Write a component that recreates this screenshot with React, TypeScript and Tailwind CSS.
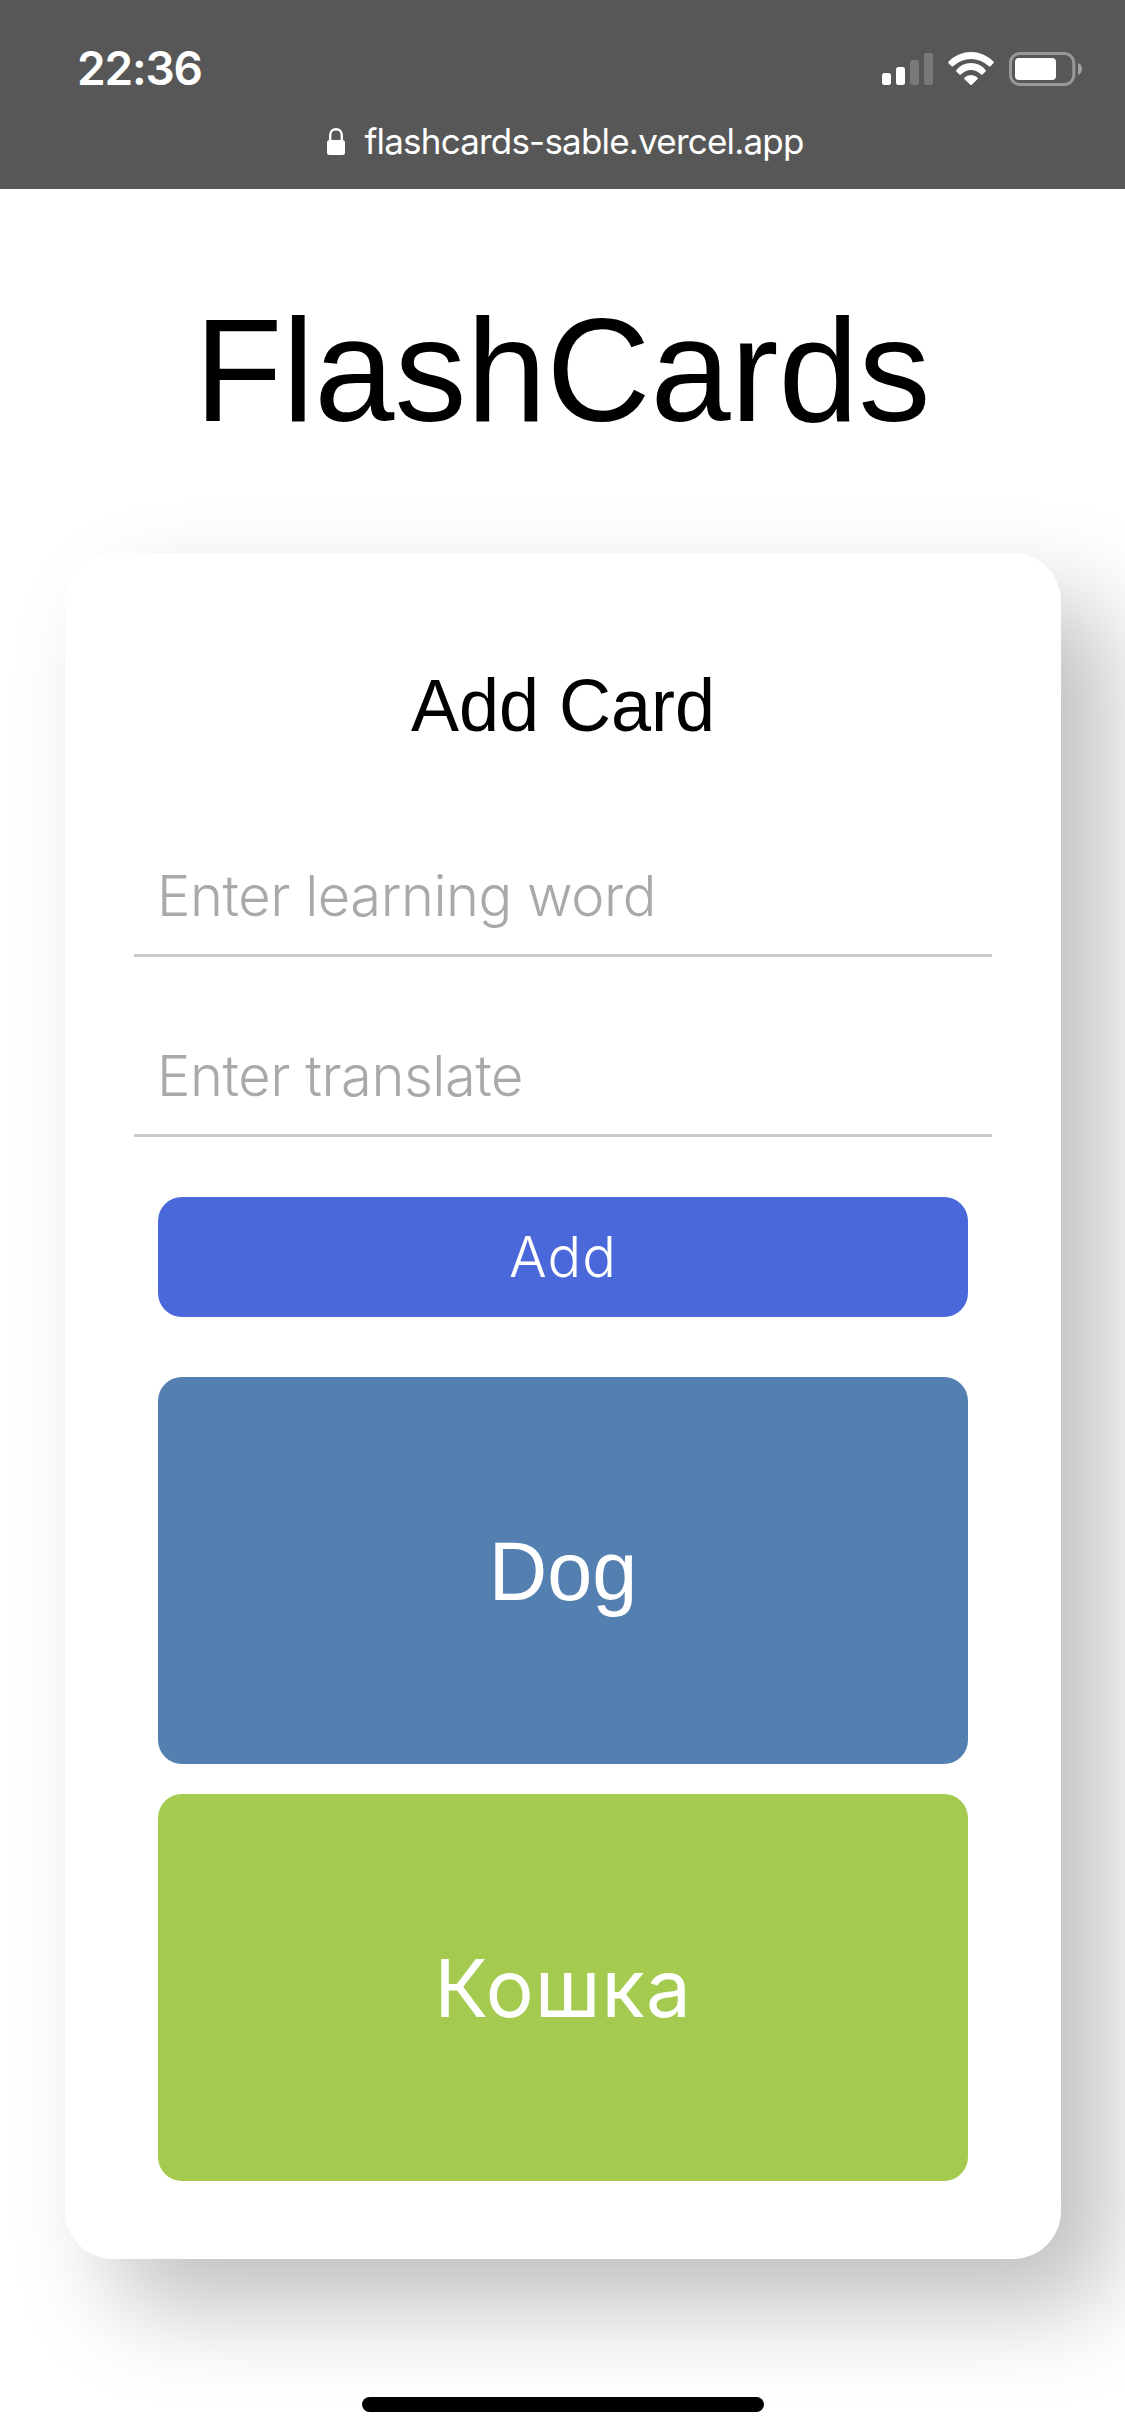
import { useState } from 'react';

const sans = "font-['Liberation_Sans',Arial,sans-serif]";
const inter = 'font-[Inter,sans-serif]';

function SignalIcon() {
  return (
    <svg width="51" height="34" viewBox="0 0 51 34" fill="#fff">
      <rect x="0" y="21" width="9" height="12" rx="2.5" />
      <rect x="14" y="15" width="9" height="18" rx="2.5" />
      <rect x="28" y="8" width="9" height="25" rx="2.5" fill="#797979" />
      <rect x="42" y="1" width="9" height="32" rx="2.5" fill="#797979" />
    </svg>
  );
}

function WifiIcon() {
  return (
    <svg width="46" height="34" viewBox="0 0 46 34" fill="#fff">
      <path d="M.6 9.6A31 31 0 0 1 45.4 9.6q.8.8 0 1.6L42.4 14.3q-.7.6-1.4 0A25.9 25.9 0 0 0 5 14.3q-.7.6-1.4 0L.6 11.2q-.8-.8 0-1.6z" />
      <path d="M8.4 18A18.8 18.8 0 0 1 37.6 18q.7.7 0 1.4L34.5 22.5q-.7.6-1.4 0A13.6 13.6 0 0 0 12.9 22.5q-.7.6-1.4 0L8.4 19.4q-.7-.7 0-1.4z" />
      <path d="M16.3 25.7A9.7 9.7 0 0 1 29.7 25.7q.6.7 0 1.3L23.7 32.7q-.7.6-1.4 0L16.3 27q-.6-.7 0-1.3z" />
    </svg>
  );
}

function BatteryIcon() {
  return (
    <svg width="73" height="34" viewBox="0 0 73 34">
      <rect x="1.5" y="1.5" width="63.3" height="31" rx="9.5" fill="none" stroke="#989898" strokeWidth="3" />
      <rect x="6" y="6" width="41" height="22" rx="4" fill="#fff" />
      <path d="M69 11c2.6 1 4 3.300 4 6s-1.400 5-4 6z" fill="#a0a0a0" />
    </svg>
  );
}

function LockIcon() {
  return (
    <svg width="18" height="27" viewBox="0 0 18 27">
      <path d="M3.200 14V7.500C3.200 3.600 5.600 1.200 9 1.200s5.800 2.400 5.800 6.300V14" fill="none" stroke="#fff" strokeWidth="2.400" />
      <rect x="0" y="12" width="18" height="15" rx="2.500" fill="#fff" />
    </svg>
  );
}

function BrowserHeader() {
  return (
    <header className={`h-[189px] bg-[#575757] pt-10 text-white ${inter}`}>
      <div className="flex h-[58px] items-center justify-between pl-[77px] pr-[43px]">
        <span className="pb-[2px] text-[46px] leading-none font-semibold tracking-[-1.2px]">22:36</span>
        <div className="flex items-center">
          <SignalIcon />
          <span className="ml-[15px]"><WifiIcon /></span>
          <span className="ml-[15px]"><BatteryIcon /></span>
        </div>
      </div>
      <div className="mt-[22px] flex h-[42px] items-center justify-center gap-[19px] pl-[6px]">
        <LockIcon />
        <span className="text-[35px] leading-[42px] tracking-[-0.8px]">flashcards-sable.vercel.app</span>
      </div>
    </header>
  );
}

function WordInput({ placeholder }: { placeholder: string }) {
  const [value, setValue] = useState('');
  return (
    <input
      value={value}
      onChange={(e) => setValue(e.target.value)}
      placeholder={placeholder}
      className={`block h-[120px] w-full border-b-[3px] border-[#cbcbcb] bg-transparent pl-[23px] text-[56px] font-light tracking-[-0.45px] outline-none placeholder:text-[#a9a9a9] ${inter}`}
    />
  );
}

export default function App() {
  return (
    <div className={`relative h-[2436px] w-[1125px] overflow-hidden bg-white ${sans}`}>
      <BrowserHeader />
      <h1 className="mt-[111px] origin-[50%_84.4%] scale-y-[1.02] text-center text-[144px] leading-none text-black">
        FlashCards
      </h1>
      <main className="mt-[109px] ml-[65px] w-[996px] rounded-[48px] bg-white px-[69px] pt-[117px] pb-[78px] shadow-[48px_48px_96px_rgba(0,0,0,0.25)]">
        <h2 className="origin-[50%_84.7%] scale-y-[1.02] text-center text-[72px] leading-none text-black">Add Card</h2>
        <form className="mt-[95px] flex flex-col gap-[60px]" onSubmit={(e) => e.preventDefault()}>
          <WordInput placeholder="Enter learning word" />
          <WordInput placeholder="Enter translate" />
          <button
            className={`mx-6 h-[120px] rounded-3xl bg-[#4a68da] text-[56px] font-light tracking-[1px] text-white ${inter}`}
          >
            Add
          </button>
        </form>
        <section className="mx-6 mt-[60px] flex flex-col gap-[30px] leading-none text-white">
          <div className="flex h-[387px] items-center justify-center rounded-3xl bg-[#5380b0] pt-[3px] text-[81px]">
            <span className="origin-[50%_84.5%] scale-y-[1.03]">Dog</span>
          </div>
          <div className={`flex h-[387px] items-center justify-center rounded-3xl bg-[#a4cb50] text-[80px] tracking-[1px] ${inter}`}>
            Кошка
          </div>
        </section>
      </main>
      <div className="absolute bottom-6 left-[362px] h-[15px] w-[402px] rounded-full bg-black" />
    </div>
  );
}
